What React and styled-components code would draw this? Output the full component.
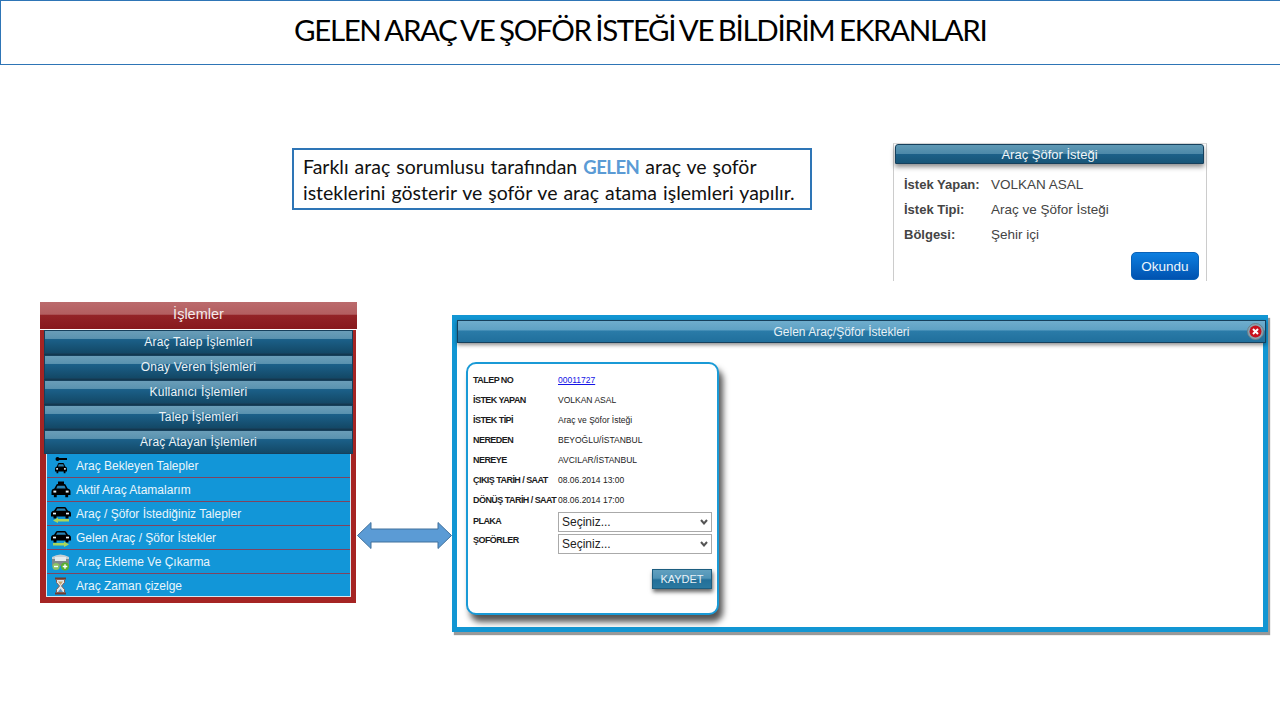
import styled, { createGlobalStyle } from "styled-components"

const Global = createGlobalStyle`
    html, body { margin: 0; padding: 0; background: #fff; }
    body { font-family: "Liberation Sans", Arial, sans-serif; }
`

const Slide = styled.div`
    width: 1280px;
    height: 720px;
    overflow: hidden;
    display: flex;
    flex-direction: column;
    background: #fff;
`

const TitleBar = styled.header`
    box-sizing: border-box;
    height: 65px;
    border: 1px solid #2e75b6;
    border-right: none;
    padding: 11px 0 0 293px;
    font-family: Lato, sans-serif;
    font-size: 29.5px;
    line-height: 36px;
    letter-spacing: -1.35px;
    word-spacing: -1.5px;
    color: #000;
    white-space: nowrap;
`

const TopRow = styled.section`
    display: flex;
    align-items: flex-start;
    margin-top: 78px;
    padding-left: 292px;
    height: 159px;
`

const Callout = styled.p`
    box-sizing: border-box;
    width: 520px;
    height: 62px;
    margin: 5px 81px 0 0;
    padding: 4px 9px;
    border: 2px solid #2e75b6;
    font-family: Lato, sans-serif;
    font-size: 19.5px;
    line-height: 26px;
    word-spacing: 1px;
    color: #111;
    white-space: nowrap;
    b { color: #5b9bd5; font-size: 18.5px; letter-spacing: -0.5px; }
`

const Notice = styled.div`
    box-sizing: border-box;
    width: 314px;
    height: 138px;
    border: 1px solid #ccc;
    border-bottom: none;
    border-top-color: #ddd;
    padding: 0 1px;
    display: flex;
    flex-direction: column;
`

const BarTitle = styled.div`
    height: ${p => p.$h}px;
    flex: none;
    text-align: center;
    color: #f2f6f8;
    font-size: ${p => p.$fs}px;
    line-height: ${p => p.$h}px;
    background: linear-gradient(#5f99b5 0%, #4c88a8 50%, #1c6088 52%, #175577 100%);
    border: 1px solid #16405c;
    box-sizing: border-box;
`

const NoticeBar = styled(BarTitle)`
    border-radius: 3px 3px 0 0;
    width: 309px;
    box-shadow: 0 3px 5px rgba(0, 0, 0, 0.45);
`

const NoticeBody = styled.dl`
    margin: 8px 0 0;
    padding-left: 9px;
    display: grid;
    grid-template-columns: 87px 1fr;
    grid-auto-rows: 25px;
    align-items: center;
    font-size: 13px;
    color: #444;
    dt { font-weight: bold; }
    dd { margin: 0; font-size: 13.5px; }
`

const ReadButton = styled.button`
    align-self: flex-end;
    width: 68px;
    height: 28px;
    margin: 5px 6px 0 0;
    padding: 0;
    border: 1px solid #0a62b8;
    border-radius: 5px;
    background: linear-gradient(#0d7fe0, #0052b0);
    color: #eef5fb;
    font-family: "Liberation Sans", sans-serif;
    font-size: 13.5px;
`

const BottomRow = styled.section`
    display: flex;
    align-items: flex-start;
    padding-left: 40px;
`

const Menu = styled.nav`
    width: 317px;
    flex: none;
`

const MenuTitle = styled.div`
    height: 27px;
    text-align: center;
    color: #f4eaea;
    font-size: 14.5px;
    line-height: 25px;
    background: linear-gradient(#bb6b6d 0%, #b35e60 45%, #932327 50%, #87191d 100%);
`

const MenuFrame = styled.div`
    box-sizing: border-box;
    width: 316px;
    height: 273px;
    border: solid #a52423;
    border-width: 0 3px 5px 4px;
    background: #a52423;
`

const MenuGroups = styled.div`
    background: #12384f;
    width: 309px;
`

const MenuButton = styled(BarTitle).attrs({ $h: 24, $fs: 12 })`
    margin-top: 1px;
    background: linear-gradient(#6a9db8 0%, #5a93b0 34%, #1b6089 38%, #134866 100%);
    line-height: 23px;
    color: #eef3f6;
    letter-spacing: 0.2px;
`

const SubList = styled.ul`
    list-style: none;
    margin: 0 0 0 2px;
    padding: 0;
    background: #1296d8;
    border: 1px solid #d8e8f0;
    border-top: none;
    height: 143px;
    width: 305px;
    box-sizing: border-box;
`

const SubItem = styled.li`
    height: 24px;
    box-sizing: border-box;
    display: flex;
    align-items: center;
    gap: 5px;
    padding-left: 4px;
    color: #e9f5fb;
    font-size: 12px;
    border-bottom: 1px solid ${p => (p.$last ? "transparent" : "#7f4460")};
    svg { flex: none; }
`

const ArrowBox = styled.div`
    width: 95px;
    flex: none;
    margin-top: 220px;
    height: 27px;
    display: flex;
`

const Window = styled.div`
    box-sizing: border-box;
    width: 816px;
    height: 317px;
    flex: none;
    margin-top: 13px;
    border: 5px solid #1296d3;
    background: #fff;
    box-shadow: 2px 3px 1px #999;
    display: flex;
    flex-direction: column;
`

const WinBar = styled(BarTitle).attrs({ $h: 23, $fs: 12 })`
    position: relative;
    flex: none;
    width: 809px;
    padding-right: 40px;
    background: linear-gradient(#6fadcd 0%, #5fa2c5 42%, #2a7ba8 48%, #206f9c 100%);
    box-shadow: 0 2px 4px rgba(0, 0, 0, 0.45);
    color: #e8f1f6;
`

const CloseBadge = styled.svg`
    position: absolute;
    right: 1px;
    top: 2px;
`

const Card = styled.div`
    box-sizing: border-box;
    width: 253px;
    height: 253px;
    margin: 19px 0 0 9px;
    padding: 6px 5px 0 5px;
    border: 2px solid #1a9ad6;
    border-radius: 10px;
    background: #fff;
    box-shadow: 4px 7px 6px #555;
`

const InfoRow = styled.div`
    display: grid;
    grid-template-columns: 85px 1fr;
    height: 20px;
    align-items: center;
    font-size: 8.5px;
    color: #222;
    white-space: nowrap;
    a { color: #1414e6; }
`

const Label = styled.span`
    font-size: 9px;
    font-weight: bold;
    color: #1c1c1c;
    letter-spacing: -0.55px;
`

const SelectRow = styled.div`
    display: grid;
    grid-template-columns: 85px 154px;
    height: 22px;
    margin-top: ${p => (p.$first ? "2px" : "0")};
`

const SelectLabel = styled(Label)`
    padding-top: ${p => p.$top}px;
`

const chevron = encodeURIComponent(
    '<svg xmlns="http://www.w3.org/2000/svg" width="8" height="6"><path d="M1 1 L4 4.5 L7 1" fill="none" stroke="#555" stroke-width="2"/></svg>'
)

const Select = styled.select`
    appearance: none;
    width: 154px;
    height: 20px;
    padding: 0 0 0 3px;
    font-family: "Liberation Sans", sans-serif;
    font-size: 12px;
    color: #222;
    background: #fff url("data:image/svg+xml,${chevron}") no-repeat right 3px center;
    border: 1px solid #aaa;
    border-radius: 0;
`

const SaveRow = styled.div`
    display: flex;
    justify-content: flex-end;
    padding-top: 13px;
`

const SaveButton = styled.button`
    width: 60px;
    height: 20px;
    padding: 0;
    border: 1px solid #1c5d80;
    background: linear-gradient(#62a0bf 0%, #4f93b6 45%, #236f99 55%, #2a789f 100%);
    color: #e9f2f7;
    font-family: "Liberation Sans", sans-serif;
    font-size: 11px;
    box-shadow: 1px 3px 4px #666;
`

const Icon = styled.svg.attrs({ width: 20, height: 18, viewBox: "0 0 20 18" })``

// drawn in a 20x12 box, placed by the icon that uses it
const Car = ({ place }) => (
    <g transform={place}>
        <path d="M3 4 L5 .8 Q5.3 0 6.5 0 H13.5 Q14.7 0 15 .8 L17 4 Q20 4.5 20 7 V10 H17.5 V12 H14.5 V10 H5.5 V12 H2.5 V10 H0 V7 Q0 4.5 3 4Z" fill="#000" />
        <path d="M5 4 L6.3 1.5 H13.7 L15 4Z" fill="#2a84b4" />
        <rect x="2" y="6" width="3" height="1.8" fill="#dfeef5" />
        <rect x="15" y="6" width="3" height="1.8" fill="#dfeef5" />
    </g>
)

const KeyCarIcon = () => (
    <Icon>
        <circle cx="6.5" cy="2" r="2" fill="#000" />
        <rect x="8" y="1" width="8" height="2" fill="#000" />
        <Car place="translate(4 6) scale(.6 .85)" />
    </Icon>
)

const TaxiIcon = () => (
    <Icon>
        <rect x="7" y="0.5" width="6" height="3" fill="#000" />
        <Car place="translate(0.5 3) scale(.95 1.1)" />
    </Icon>
)

const CarArrowIcon = ({ right }) => (
    <Icon>
        <Car place="translate(0 2) scale(1 .95)" />
        <path
            d={right ? "M2 14 H13 V12.5 L18 15.5 L13 18 V16.5 H2Z" : "M18 14 H7 V12.5 L2 15.5 L7 18 V16.5 H18Z"}
            fill="#a9d65a"
        />
    </Icon>
)

const GarageIcon = () => (
    <Icon>
        <path d="M1 4 Q9.5 -1 18 4 V6 H1Z" fill="#c9cfd2" />
        <rect x="1" y="6" width="17" height="7" fill="#7f8a8c" />
        <rect x="4" y="4" width="11" height="4" fill="#e6ecee" />
        <circle cx="5" cy="13.5" r="3.6" fill="#8cc265" />
        <rect x="3" y="12.8" width="4" height="1.4" fill="#fff" />
        <circle cx="14" cy="13.5" r="4" fill="#58b030" />
        <path d="M13.3 11.2 h1.4 v1.6 h1.6 v1.4 h-1.6 v1.6 h-1.4 v-1.6 h-1.6 v-1.4 h1.6z" fill="#fff" />
    </Icon>
)

const HourglassIcon = () => (
    <Icon>
        <rect x="4" y="0.5" width="11" height="2" fill="#6f3b30" />
        <rect x="4" y="15.5" width="11" height="2" fill="#6f3b30" />
        <path d="M5.5 2.5 H13.5 V5.5 L10.5 9 L13.5 12.5 V15.5 H5.5 V12.5 L8.5 9 L5.5 5.5Z" fill="#dfe8ea" stroke="#8a5c50" />
        <path d="M7 4.5 H12 L9.5 8Z" fill="#c9a46a" />
        <path d="M7 15 H12 L9.5 11.5Z" fill="#5b98c4" />
    </Icon>
)

const DoubleArrow = () => (
    <svg width="95" height="27" viewBox="0 0 95 27">
        <path d="M0.5 13.5 L14 0.5 V7 H81 V0.5 L94.5 13.5 L81 26.5 V20 H14 V26.5Z" fill="#5b9bd5" stroke="#41719c" />
    </svg>
)

const groups = ["Araç Talep İşlemleri", "Onay Veren İşlemleri", "Kullanıcı İşlemleri", "Talep İşlemleri", "Araç Atayan İşlemleri"]

const subItems = [
    { label: "Araç Bekleyen Talepler", icon: <KeyCarIcon /> },
    { label: "Aktif Araç Atamalarım", icon: <TaxiIcon /> },
    { label: "Araç / Şöfor İstediğiniz Talepler", icon: <CarArrowIcon /> },
    { label: "Gelen Araç / Şöfor İstekler", icon: <CarArrowIcon right /> },
    { label: "Araç Ekleme Ve Çıkarma", icon: <GarageIcon /> },
    { label: "Araç Zaman çizelge", icon: <HourglassIcon /> },
]

const details = [
    ["TALEP NO", <a href="#talep">00011727</a>],
    ["İSTEK YAPAN", "VOLKAN ASAL"],
    ["İSTEK TİPİ", "Araç ve Şöfor İsteği"],
    ["NEREDEN", "BEYOĞLU/İSTANBUL"],
    ["NEREYE", "AVCILAR/İSTANBUL"],
    ["ÇIKIŞ TARİH / SAAT", "08.06.2014 13:00"],
    ["DÖNÜŞ TARİH / SAAT", "08.06.2014 17:00"],
]

export default function App() {
    return (
        <Slide>
            <Global />
            <TitleBar>GELEN ARAÇ VE ŞOFÖR İSTEĞİ VE BİLDİRİM EKRANLARI</TitleBar>

            <TopRow>
                <Callout>
                    Farklı araç sorumlusu tarafından <b>GELEN</b> araç ve şoför<br />
                    isteklerini gösterir ve şoför ve araç atama işlemleri yapılır.
                </Callout>
                <Notice>
                    <NoticeBar $h={20} $fs={13}>Araç Şöfor İsteği</NoticeBar>
                    <NoticeBody>
                        <dt>İstek Yapan:</dt><dd>VOLKAN ASAL</dd>
                        <dt>İstek Tipi:</dt><dd>Araç ve Şöfor İsteği</dd>
                        <dt>Bölgesi:</dt><dd>Şehir içi</dd>
                    </NoticeBody>
                    <ReadButton>Okundu</ReadButton>
                </Notice>
            </TopRow>

            <BottomRow>
                <Menu>
                    <MenuTitle>İşlemler</MenuTitle>
                    <MenuFrame>
                        <MenuGroups>
                            {groups.map(g => <MenuButton key={g}>{g}</MenuButton>)}
                        </MenuGroups>
                        <SubList>
                            {subItems.map((s, i) => (
                                <SubItem key={s.label} $last={i === subItems.length - 1}>
                                    {s.icon}
                                    {s.label}
                                </SubItem>
                            ))}
                        </SubList>
                    </MenuFrame>
                </Menu>

                <ArrowBox><DoubleArrow /></ArrowBox>

                <Window>
                    <WinBar>
                        Gelen Araç/Şöfor İstekleri
                        <CloseBadge width="17" height="17" viewBox="0 0 17 17">
                            <circle cx="8.5" cy="8.5" r="8" fill="#8aa4b2" stroke="#6b7f8a" />
                            <circle cx="8.5" cy="8.5" r="6" fill="#c8101c" />
                            <path d="M6 6 L11 11 M11 6 L6 11" stroke="#fff" strokeWidth="2" />
                        </CloseBadge>
                    </WinBar>
                    <Card>
                        {details.map(([k, v]) => (
                            <InfoRow key={k}><Label>{k}</Label><span>{v}</span></InfoRow>
                        ))}
                        <SelectRow $first>
                            <SelectLabel $top={4}>PLAKA</SelectLabel>
                            <Select><option>Seçiniz...</option></Select>
                        </SelectRow>
                        <SelectRow>
                            <SelectLabel $top={1}>ŞOFÖRLER</SelectLabel>
                            <Select><option>Seçiniz...</option></Select>
                        </SelectRow>
                        <SaveRow><SaveButton>KAYDET</SaveButton></SaveRow>
                    </Card>
                </Window>
            </BottomRow>
        </Slide>
    )
}
